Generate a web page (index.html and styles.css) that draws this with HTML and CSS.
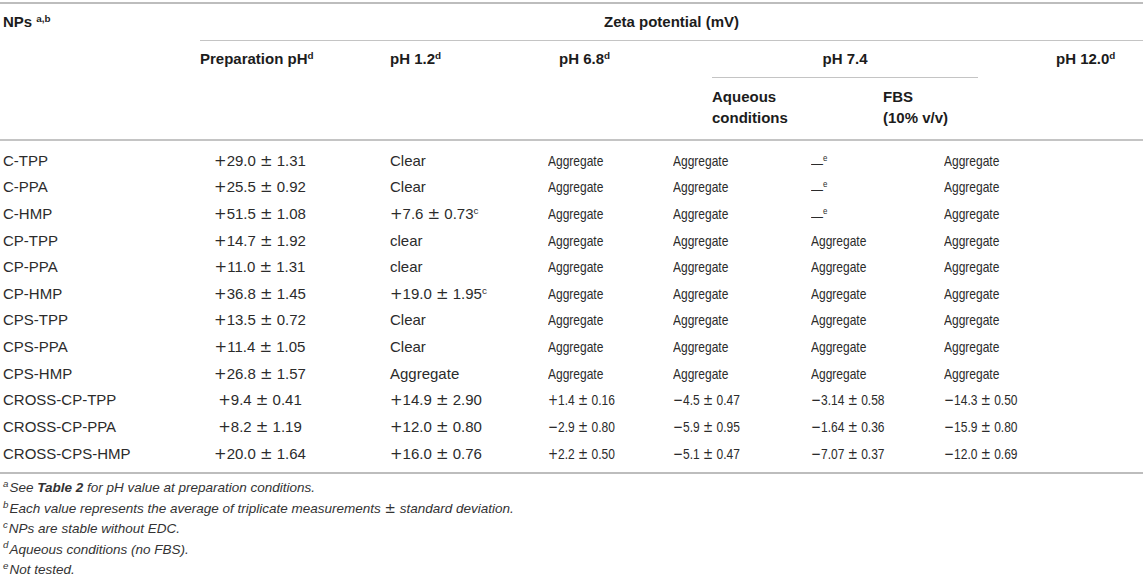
FILE: index.html
```html
<!DOCTYPE html>
<html lang="en">
<head>
    <meta charset="UTF-8">
    <title>Zeta potential of NPs</title>
    <link rel="stylesheet" href="styles.css">
</head>
<body>

<div class="table-wrap">
    <div class="thead">
        <div class="th th-name">NPs <sup>a,b</sup></div>
        <div class="th th-zeta">Zeta potential (mV)</div>
        <div class="th th-prep">Preparation pH<sup>d</sup></div>
        <div class="th th-ph1">pH 1.2<sup>d</sup></div>
        <div class="th th-ph6">pH 6.8<sup>d</sup></div>
        <div class="th th-ph7"><span>pH 7.4</span></div>
        <div class="th th-aq">Aqueous<br>conditions</div>
        <div class="th th-fbs">FBS<br>(10% v/v)</div>
        <div class="th th-ph12">pH 12.0<sup>d</sup></div>
    </div>

    <div class="tbody">
        <div class="row">
            <div>C-TPP</div>
            <div><i class="op">+</i>29.0 <i class="op">±</i> 1.31</div>
            <div>Clear</div>
            <div>Aggregate</div>
            <div>Aggregate</div>
            <div><span class="dash">—</span><sup>e</sup></div>
            <div>Aggregate</div>
        </div>
        <div class="row">
            <div>C-PPA</div>
            <div><i class="op">+</i>25.5 <i class="op">±</i> 0.92</div>
            <div>Clear</div>
            <div>Aggregate</div>
            <div>Aggregate</div>
            <div><span class="dash">—</span><sup>e</sup></div>
            <div>Aggregate</div>
        </div>
        <div class="row">
            <div>C-HMP</div>
            <div><i class="op">+</i>51.5 <i class="op">±</i> 1.08</div>
            <div><i class="op">+</i>7.6 <i class="op">±</i> 0.73<sup>c</sup></div>
            <div>Aggregate</div>
            <div>Aggregate</div>
            <div><span class="dash">—</span><sup>e</sup></div>
            <div>Aggregate</div>
        </div>
        <div class="row">
            <div>CP-TPP</div>
            <div><i class="op">+</i>14.7 <i class="op">±</i> 1.92</div>
            <div>clear</div>
            <div>Aggregate</div>
            <div>Aggregate</div>
            <div>Aggregate</div>
            <div>Aggregate</div>
        </div>
        <div class="row">
            <div>CP-PPA</div>
            <div><i class="op">+</i>11.0 <i class="op">±</i> 1.31</div>
            <div>clear</div>
            <div>Aggregate</div>
            <div>Aggregate</div>
            <div>Aggregate</div>
            <div>Aggregate</div>
        </div>
        <div class="row">
            <div>CP-HMP</div>
            <div><i class="op">+</i>36.8 <i class="op">±</i> 1.45</div>
            <div><i class="op">+</i>19.0 <i class="op">±</i> 1.95<sup>c</sup></div>
            <div>Aggregate</div>
            <div>Aggregate</div>
            <div>Aggregate</div>
            <div>Aggregate</div>
        </div>
        <div class="row">
            <div>CPS-TPP</div>
            <div><i class="op">+</i>13.5 <i class="op">±</i> 0.72</div>
            <div>Clear</div>
            <div>Aggregate</div>
            <div>Aggregate</div>
            <div>Aggregate</div>
            <div>Aggregate</div>
        </div>
        <div class="row">
            <div>CPS-PPA</div>
            <div><i class="op">+</i>11.4 <i class="op">±</i> 1.05</div>
            <div>Clear</div>
            <div>Aggregate</div>
            <div>Aggregate</div>
            <div>Aggregate</div>
            <div>Aggregate</div>
        </div>
        <div class="row">
            <div>CPS-HMP</div>
            <div><i class="op">+</i>26.8 <i class="op">±</i> 1.57</div>
            <div>Aggregate</div>
            <div>Aggregate</div>
            <div>Aggregate</div>
            <div>Aggregate</div>
            <div>Aggregate</div>
        </div>
        <div class="row">
            <div>CROSS-CP-TPP</div>
            <div><i class="op">+</i>9.4 <i class="op">±</i> 0.41</div>
            <div><i class="op">+</i>14.9 <i class="op">±</i> 2.90</div>
            <div><i class="op">+</i>1.4 <i class="op">±</i> 0.16</div>
            <div><i class="op">−</i>4.5 <i class="op">±</i> 0.47</div>
            <div><i class="op">−</i>3.14 <i class="op">±</i> 0.58</div>
            <div><i class="op">−</i>14.3 <i class="op">±</i> 0.50</div>
        </div>
        <div class="row">
            <div>CROSS-CP-PPA</div>
            <div><i class="op">+</i>8.2 <i class="op">±</i> 1.19</div>
            <div><i class="op">+</i>12.0 <i class="op">±</i> 0.80</div>
            <div><i class="op">−</i>2.9 <i class="op">±</i> 0.80</div>
            <div><i class="op">−</i>5.9 <i class="op">±</i> 0.95</div>
            <div><i class="op">−</i>1.64 <i class="op">±</i> 0.36</div>
            <div><i class="op">−</i>15.9 <i class="op">±</i> 0.80</div>
        </div>
        <div class="row">
            <div>CROSS-CPS-HMP</div>
            <div><i class="op">+</i>20.0 <i class="op">±</i> 1.64</div>
            <div><i class="op">+</i>16.0 <i class="op">±</i> 0.76</div>
            <div><i class="op">+</i>2.2 <i class="op">±</i> 0.50</div>
            <div><i class="op">−</i>5.1 <i class="op">±</i> 0.47</div>
            <div><i class="op">−</i>7.07 <i class="op">±</i> 0.37</div>
            <div><i class="op">−</i>12.0 <i class="op">±</i> 0.69</div>
        </div>
    </div>
</div>

<div class="notes">
    <p><sup>a</sup>See <b>Table 2</b> for pH value at preparation conditions.</p>
    <p><sup>b</sup>Each value represents the average of triplicate measurements <span class="pm">±</span> standard deviation.</p>
    <p><sup>c</sup>NPs are stable without EDC.</p>
    <p><sup>d</sup>Aqueous conditions (no FBS).</p>
    <p><sup>e</sup>Not tested.</p>
</div>

</body>
</html>
```

FILE: styles.css
```css
body {
    font-family: "Liberation Sans", Arial, sans-serif;
    margin: 0;
    padding: 0;
    background-color: white;
    color: #2b2b2b;
    font-size: 15px;
}

sup {
    font-size: 0.66em;
    line-height: 0;
    vertical-align: 0.55em;
}

.table-wrap {
    margin-top: 2px;
    border-top: 2px solid #bdbdbd;
    border-bottom: 2px solid #bdbdbd;
}

/* header */
.thead {
    display: grid;
    grid-template-columns: 200px 190px 169px 153px 171px 173px 1fr;
    grid-template-rows: auto auto auto;
    border-bottom: 2px solid #c4c4c4;
    font-weight: bold;
    color: #1c1c1c;
}

.th {
    line-height: 36px;
    white-space: nowrap;
}

.th-name {
    grid-column: 1;
    grid-row: 1 / 4;
    padding-left: 3px;
}

.th-zeta {
    grid-column: 2 / 8;
    grid-row: 1;
    text-align: center;
    border-bottom: 1px solid #c4c4c4;
}

.th-prep { grid-column: 2; grid-row: 2 / 4; }
.th-ph1 { grid-column: 3; grid-row: 2 / 4; }
.th-ph6 { grid-column: 4; grid-row: 2 / 4; }
.th-ph12 { grid-column: 7; grid-row: 2 / 4; }

.th-ph7 {
    grid-column: 5 / 7;
    grid-row: 2;
}

.th-ph7 span {
    display: block;
    width: 266px;
    text-align: center;
    border-bottom: 1px solid #c4c4c4;
}

.th-aq,
.th-fbs {
    grid-row: 3;
    line-height: 20.5px;
    padding: 9px 0 11px;
}

.th-aq { grid-column: 5; }
.th-fbs { grid-column: 6; }

/* body */
.tbody {
    padding: 6.7px 0 4.7px;
}

.row {
    display: grid;
    grid-template-columns: 200px 190px 158px 125px 138px 133px 1fr;
    height: 26.64px;
    line-height: 26.64px;
    white-space: nowrap;
}

.row > div:first-child {
    padding-left: 3px;
}

.row > div:nth-child(2) {
    text-align: center;
    padding-right: 70px;
}

/* the right-hand columns are set narrower in the source table */
.row > div:nth-child(n+4) {
    transform: scaleX(0.8);
    transform-origin: left center;
}

.op {
    font-style: normal;
    font-family: "DejaVu Sans", sans-serif;
}

.dash {
    position: relative;
    top: 2px;
}

/* footnotes */
.notes {
    margin-top: 4px;
    font-size: 13.5px;
    font-style: italic;
    color: #333;
}

.notes p {
    margin: 0;
    line-height: 20.25px;
    padding-left: 3px;
}

.notes sup {
    font-size: 0.72em;
    margin-right: 1px;
}

.notes .pm {
    font-style: normal;
    font-family: "DejaVu Sans", sans-serif;
}
```
